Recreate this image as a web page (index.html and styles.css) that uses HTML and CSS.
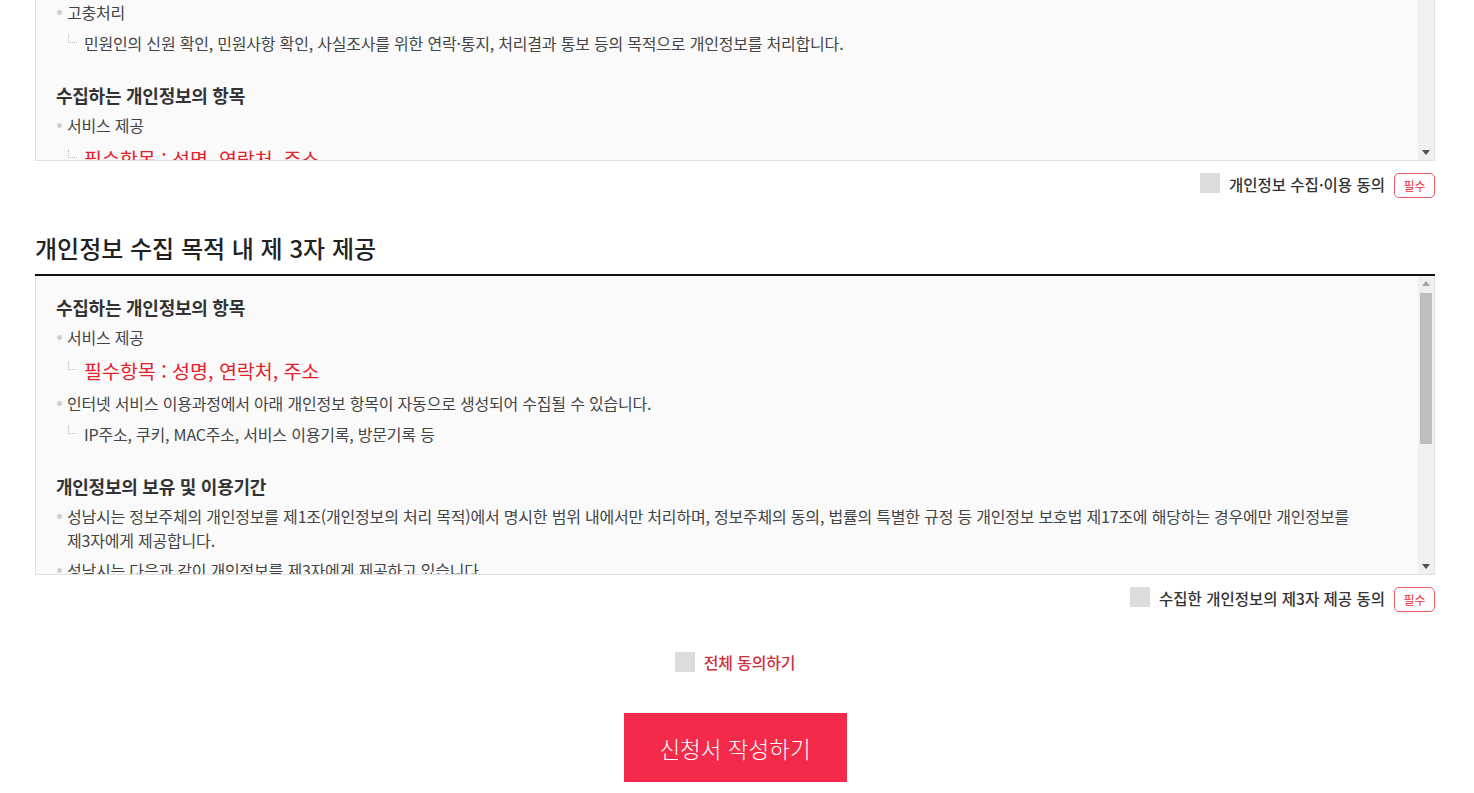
FILE: index.html
```html
<!DOCTYPE html>
<html lang="ko">
<head>
<meta charset="utf-8">
<title>개인정보 동의</title>
<link rel="stylesheet" href="styles.css">
</head>
<body>
<div class="wrap">
  <div class="terms terms-first">
    <div class="terms-body">
      <h3 class="t-head">개인정보의 처리 목적</h3>
      <ul class="t-list">
        <li>민원사무 처리
          <p class="sub">민원인의 신원 확인, 민원사항 확인, 사실조사를 위한 연락·통지, 처리결과 통보 등의 목적으로 개인정보를 처리합니다.</p>
        </li>
        <li>고충처리
          <p class="sub">민원인의 신원 확인, 민원사항 확인, 사실조사를 위한 연락·통지, 처리결과 통보 등의 목적으로 개인정보를 처리합니다.</p>
        </li>
      </ul>
      <h3 class="t-head">수집하는 개인정보의 항목</h3>
      <ul class="t-list">
        <li>서비스 제공
          <p class="sub sub-red">필수항목 : 성명, 연락처, 주소</p>
        </li>
        <li>인터넷 서비스 이용과정에서 아래 개인정보 항목이 자동으로 생성되어 수집될 수 있습니다.
          <p class="sub">IP주소, 쿠키, MAC주소, 서비스 이용기록, 방문기록 등</p>
        </li>
      </ul>
    </div>
    <div class="sbar">
      <span class="sbar-btn"><svg class="arr arr-up" width="8" height="5" viewBox="0 0 8 5"><path d="M0 5L4 0L8 5Z"/></svg></span>
      <span class="sbar-track"><span class="sbar-thumb thumb-first"></span></span>
      <span class="sbar-btn"><svg class="arr arr-down" width="8" height="5" viewBox="0 0 8 5"><path d="M0 0L8 0L4 5Z"/></svg></span>
    </div>
  </div>
  <div class="agree-row">
    <span class="chk"></span>
    <span class="agree-label">개인정보 수집·이용 동의</span>
    <span class="badge">필수</span>
  </div>

  <h2 class="sec-title">개인정보 수집 목적 내 제 3자 제공</h2>
  <div class="terms terms-second">
    <div class="terms-body">
      <h3 class="t-head">수집하는 개인정보의 항목</h3>
      <ul class="t-list">
        <li>서비스 제공
          <p class="sub sub-red">필수항목 : 성명, 연락처, 주소</p>
        </li>
        <li>인터넷 서비스 이용과정에서 아래 개인정보 항목이 자동으로 생성되어 수집될 수 있습니다.
          <p class="sub">IP주소, 쿠키, MAC주소, 서비스 이용기록, 방문기록 등</p>
        </li>
      </ul>
      <h3 class="t-head">개인정보의 보유 및 이용기간</h3>
      <ul class="t-list">
        <li>성남시는 정보주체의 개인정보를 제1조(개인정보의 처리 목적)에서 명시한 범위 내에서만 처리하며, 정보주체의 동의, 법률의 특별한 규정 등 개인정보 보호법 제17조에 해당하는 경우에만 개인정보를<br>제3자에게 제공합니다.</li>
        <li>성남시는 다음과 같이 개인정보를 제3자에게 제공하고 있습니다.
          <p class="sub">제공받는 자 : 관계 부서 및 유관기관</p>
        </li>
      </ul>
    </div>
    <div class="sbar">
      <span class="sbar-btn"><svg class="arr arr-up" width="8" height="5" viewBox="0 0 8 5"><path d="M0 5L4 0L8 5Z"/></svg></span>
      <span class="sbar-track"><span class="sbar-thumb thumb-second"></span></span>
      <span class="sbar-btn"><svg class="arr arr-down" width="8" height="5" viewBox="0 0 8 5"><path d="M0 0L8 0L4 5Z"/></svg></span>
    </div>
  </div>
  <div class="agree-row">
    <span class="chk"></span>
    <span class="agree-label">수집한 개인정보의 제3자 제공 동의</span>
    <span class="badge">필수</span>
  </div>

  <div class="all-row">
    <span class="chk"></span>
    <span class="all-label">전체 동의하기</span>
  </div>

  <div class="btn-row">
    <button class="btn-submit" type="button">신청서 작성하기</button>
  </div>
</div>
</body>
</html>
```
FILE: styles.css
```css
html, body {
  margin: 0;
  padding: 0;
  background: #fff;
}
body {
  font-family: "Noto Sans CJK KR", "Noto Sans", sans-serif;
  color: #333;
}
.wrap {
  width: 1400px;
  margin-left: 35px;
  padding-bottom: 40px;
}
.terms {
  box-sizing: border-box;
  display: flex;
  height: 299px;
  background: #fafafa;
  border: 1px solid #e1e1e1;
  border-top: 0;
}
.terms-first {
  height: 272px;
  margin-top: -111px;
  border-top: 1px solid #e1e1e1;
}
.terms-body {
  flex: 1;
  min-width: 0;
  overflow: hidden;
  padding: 19px 20px 20px 20px;
}
.sbar {
  flex: none;
  width: 16px;
  display: flex;
  flex-direction: column;
  background: #f0f0f0;
}
.sbar-btn {
  flex: none;
  height: 15px;
  display: flex;
  align-items: center;
  justify-content: center;
}
.arr {
  display: block;
}
.arr-up {
  fill: #a3a3a3;
}
.arr-down {
  fill: #505050;
}
.sbar-track {
  flex: 1;
  display: flex;
  flex-direction: column;
  padding: 2px 2px 0 2px;
}
.sbar-thumb {
  display: block;
  background: #bdbdbd;
}
.thumb-first {
  height: 80px;
}
.thumb-second {
  height: 151px;
}
.t-head {
  margin: 0;
  font-size: 18px;
  line-height: 24px;
  letter-spacing: -0.25px;
  font-weight: 700;
  color: #333;
}
.t-list {
  list-style: none;
  margin: 0 0 28px 0;
  padding: 0;
}
.t-list:last-child {
  margin-bottom: 0;
}
.t-list > li {
  position: relative;
  margin-top: 6px;
  padding-left: 11px;
  font-size: 16px;
  line-height: 24px;
  letter-spacing: -0.2px;
  color: #444;
}
.t-list > li::before {
  content: "";
  position: absolute;
  left: 1px;
  top: 10px;
  width: 5px;
  height: 5px;
  border-radius: 50%;
  background: #cfcfcf;
}
.sub {
  position: relative;
  margin: 7px 0 0 0;
  padding-left: 17px;
  font-size: 16px;
  line-height: 24px;
  letter-spacing: -0.2px;
  color: #444;
}
.sub::before {
  content: "";
  position: absolute;
  left: 1px;
  top: 4px;
  width: 8px;
  height: 7px;
  border-left: 1px dotted #bbb;
  border-bottom: 1px dotted #bbb;
}
.sub-red {
  margin-top: 8px;
  font-size: 19.5px;
  line-height: 28px;
  letter-spacing: 0;
  color: #e4222e;
}
.sub-red::before {
  top: 5px;
}
.agree-row {
  display: flex;
  justify-content: flex-end;
  align-items: flex-start;
  margin-top: 12px;
  height: 25px;
}
.chk {
  display: inline-block;
  flex: none;
  width: 20px;
  height: 20px;
  background: #dcdcdc;
  margin-right: 9px;
}
.agree-label {
  font-size: 15.5px;
  line-height: 22px;
  font-weight: 500;
  color: #333;
}
.badge {
  box-sizing: border-box;
  margin-left: 9px;
  height: 25px;
  padding: 0 8.5px;
  border: 1px solid #f05a61;
  border-radius: 5px;
  font-size: 12px;
  line-height: 23px;
  color: #e8323c;
}
.sec-title {
  margin: 33px 0 0 0;
  padding-bottom: 9px;
  font-size: 24px;
  line-height: 34px;
  font-weight: 500;
  color: #222;
  border-bottom: 2px solid #111;
}
.all-row {
  display: flex;
  justify-content: center;
  align-items: center;
  margin-top: 40px;
  height: 20px;
}
.all-label {
  font-size: 16px;
  line-height: 20px;
  letter-spacing: -0.2px;
  font-weight: 500;
  color: #d0303c;
}
.btn-row {
  display: flex;
  justify-content: center;
  margin-top: 41px;
}
.btn-submit {
  width: 223px;
  height: 69px;
  border: 0;
  background: #f42a4b;
  color: #fff;
  font-family: "Noto Sans CJK KR", "Noto Sans", sans-serif;
  font-size: 22.5px;
  font-weight: 300;
  cursor: pointer;
}
```
